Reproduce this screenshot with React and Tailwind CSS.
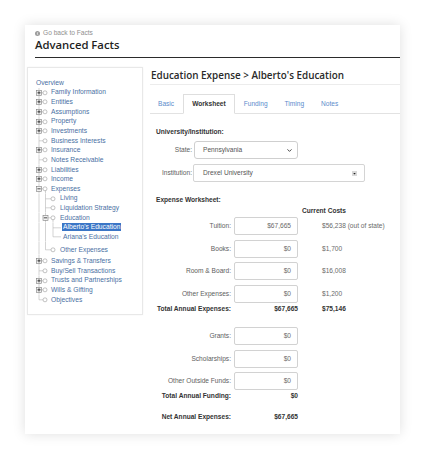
import React from 'react';
import { ChevronDown } from 'lucide-react';

const ROW = 9.65;
const MID = ROW / 2;
const LINE = '#b5b5b5';

// tree rows, x positions are relative to the sidebar's left edge
const X0 = 11;
const X1 = 17.5;
const X2 = 25;

const tree = [
  { label: 'Family Information', lvl: 0, toggle: true },
  { label: 'Entities', lvl: 0, toggle: true },
  { label: 'Assumptions', lvl: 0, toggle: true },
  { label: 'Property', lvl: 0, toggle: true },
  { label: 'Investments', lvl: 0, toggle: true },
  { label: 'Business Interests', lvl: 0 },
  { label: 'Insurance', lvl: 0, toggle: true },
  { label: 'Notes Receivable', lvl: 0 },
  { label: 'Liabilities', lvl: 0, toggle: true },
  { label: 'Income', lvl: 0, toggle: true },
  { label: 'Expenses', lvl: 0, toggle: true, open: true, start: X1 },
  { label: 'Living', lvl: 1 },
  { label: 'Liquidation Strategy', lvl: 1 },
  { label: 'Education', lvl: 1, toggle: true, open: true, start: X2 },
  { label: "Alberto's Education", lvl: 2, selected: true },
  { label: "Ariana's Education", lvl: 2, last: true },
  { spacer: 3.5, lines: [X0, X1] },
  { label: 'Other Expenses', lvl: 1, last: true },
  { spacer: 1.2, lines: [X0] },
  { label: 'Savings & Transfers', lvl: 0, toggle: true },
  { label: 'Buy/Sell Transactions', lvl: 0 },
  { label: 'Trusts and Partnerships', lvl: 0, toggle: true },
  { label: 'Wills & Gifting', lvl: 0, toggle: true },
  { label: 'Objectives', lvl: 0, last: true },
];

function Toggle({ x, open }) {
  return (
    <g>
      <rect x={x - 2.5} y={MID - 2.5} width={5} height={5} fill="#f2f2f2" stroke="#7d7d7d" strokeWidth={0.6} />
      <line x1={x - 1.6} x2={x + 1.6} y1={MID} y2={MID} stroke="#1f1f1f" strokeWidth={0.8} />
      {!open && <line x1={x} x2={x} y1={MID - 1.6} y2={MID + 1.6} stroke="#1f1f1f" strokeWidth={0.8} />}
    </g>
  );
}

function TreeRow({ node }) {
  if (node.spacer) {
    return (
      <svg width={30} height={node.spacer} className="block">
        {node.lines.map((x) => (
          <line key={x} x1={x} x2={x} y1={0} y2={node.spacer} stroke={LINE} strokeWidth={0.6} />
        ))}
      </svg>
    );
  }

  const { lvl, toggle, open, last, start, selected, label } = node;
  const own = [X0, X1, X2][lvl];
  const lines = [X0, X1].slice(0, lvl);
  const cx = lvl === 0 ? 17 : 25;
  const width = lvl === 0 ? 22 : lvl === 1 ? 31 : 34;

  return (
    <div className="flex items-center h-[9.65px]">
      <svg width={width} height={ROW} className="shrink-0">
        {lines.map((x) => (
          <line key={x} x1={x} x2={x} y1={0} y2={ROW} stroke={LINE} strokeWidth={0.6} />
        ))}
        <line x1={own} x2={own} y1={0} y2={last ? MID : ROW} stroke={LINE} strokeWidth={0.6} />
        {start && <line x1={start} x2={start} y1={MID} y2={ROW} stroke={LINE} strokeWidth={0.6} />}
        {lvl < 2 ? (
          <>
            <line x1={own} x2={cx - 2} y1={MID} y2={MID} stroke={LINE} strokeWidth={0.6} />
            <circle cx={cx} cy={MID} r={2} fill="#fff" stroke="#9a9a9a" strokeWidth={0.6} />
          </>
        ) : (
          <line x1={own} x2={33} y1={MID} y2={MID} stroke={LINE} strokeWidth={0.6} />
        )}
        {toggle && <Toggle x={own} open={open} />}
      </svg>
      <span
        className={
          selected
            ? 'ml-0 px-[1px] leading-[8px] bg-[#3b76c6] text-white whitespace-nowrap'
            : lvl === 2
            ? 'ml-0 px-[1px] text-[#4a6fa3] whitespace-nowrap'
            : 'ml-[1px] text-[#4a6fa3] whitespace-nowrap'
        }
      >
        {label}
      </span>
    </div>
  );
}

function Field({ label, value, note }) {
  return (
    <div className="flex items-center h-[18px]">
      <div className="w-[75px] text-right text-[#5e5e5e]">{label}</div>
      <div className="ml-[3px] w-[64px] h-[18px] border border-[#d2d2d2] rounded-[2px] flex items-center justify-end pr-[6px] text-[#6a6a6a]">
        {value}
      </div>
      {note && <div className="ml-[24px] whitespace-nowrap text-[#6a6a6a]">{note}</div>}
    </div>
  );
}

function Total({ label, value, note }) {
  return (
    <div className="flex items-center h-[8px] font-bold text-[#333]">
      <div className="w-[75px] text-right whitespace-nowrap">{label}</div>
      <div className="ml-[3px] w-[64px] text-right">{value}</div>
      {note && <div className="ml-[24px]">{note}</div>}
    </div>
  );
}

export default function App() {
  const tabs = ['Basic', 'Worksheet', 'Funding', 'Timing', 'Notes'];

  return (
    <div className="min-h-[460px] bg-white pt-[25px] pl-[25px] font-['Liberation_Sans',Arial,sans-serif]">
      <div className="w-[375px] h-[409px] bg-white shadow-[0_0_12px_rgba(0,0,0,0.13)]">
        {/* header */}
        <div className="pl-[10px] pt-[3.5px]">
          <div className="border-b border-[#2b2b2b] pb-[5px]">
            <div className="flex items-center h-[9px] gap-[3px] text-[6.6px] text-[#8f8f8f]">
              <svg width="5" height="5" viewBox="0 0 10 10">
                <circle cx="5" cy="5" r="5" fill="#9a9a9a" />
                <path d="M6.5 2.5 L3.8 5 L6.5 7.5" fill="none" stroke="#fff" strokeWidth="1.6" />
              </svg>
              Go back to Facts
            </div>
            <div className="mt-[0.5px] h-[14px] leading-[14px] text-[11.3px] font-semibold text-[#1f1f1f] font-['Open_Sans',sans-serif]">
              Advanced Facts
            </div>
          </div>
        </div>

        <div className="flex">
          {/* sidebar */}
          <div className="ml-[2px] mt-[9px] w-[116px] h-[248px] border border-[#e8e8e8] shadow-[0_0_2px_rgba(0,0,0,0.05)] pt-[10px] text-[6.7px]">
            <div className="h-[9.65px] flex items-center pl-[8px] text-[#4a6fa3]">Overview</div>
            {tree.map((n, i) => (
              <TreeRow key={i} node={n} />
            ))}
          </div>

          {/* content */}
          <div className="ml-[7px] flex-1">
            <div className="mt-[8px] h-[19px] flex items-center pl-[1px] border-b border-[#ececec] text-[9.9px] font-semibold text-[#2a2a2a] font-['Open_Sans',sans-serif]">
              Education Expense &gt; Alberto's Education
            </div>

            <div className="pt-[9px] border-b border-[#e2e2e2] flex gap-[1px] text-[6.6px]">
              {tabs.map((t) =>
                t === 'Worksheet' ? (
                  <div
                    key={t}
                    className="h-[20px] -mb-[1px] px-[8px] flex items-center border border-[#dedede] border-b-white bg-white font-bold text-[#333]"
                  >
                    {t}
                  </div>
                ) : (
                  <div key={t} className="h-[19px] px-[8px] flex items-center text-[#5b8ccb]">
                    {t}
                  </div>
                )
              )}
            </div>

            <div className="pl-[6px] text-[6.6px]">
              <div className="mt-[14px] h-[8px] leading-[8px] font-bold text-[#333]">University/Institution:</div>

              <div className="mt-[5px] flex items-center h-[18px]">
                <div className="w-[36px] text-right text-[#5e5e5e]">State:</div>
                <div className="ml-[2px] w-[104px] h-[18px] border border-[#cfcfcf] rounded-[3px] flex items-center justify-between pl-[8px] pr-[4px] text-[#555]">
                  Pennsylvania
                  <ChevronDown size={7} strokeWidth={3} color="#333" />
                </div>
              </div>

              <div className="mt-[5px] flex items-center h-[18px]">
                <div className="w-[36px] text-right text-[#5e5e5e]">Institution:</div>
                <div className="ml-[1px] w-[172px] h-[18px] border border-[#d4d4d4] rounded-[2px] flex items-center justify-between pl-[9px] pr-[7px] text-[#555]">
                  Drexel University
                  <svg width="5" height="5" viewBox="0 0 10 10">
                    <rect x="0" y="0" width="10" height="10" fill="#d9d9d9" />
                    <path d="M2.5 4 L7.5 4 L5 7 Z" fill="#222" />
                  </svg>
                </div>
              </div>

              <div className="mt-[14px] h-[8px] leading-[8px] font-bold text-[#333]">Expense Worksheet:</div>
              <div className="mt-[3px] h-[8px] leading-[8px] ml-[146px] font-bold text-[#333]">Current Costs</div>

              <div className="mt-[2px] flex flex-col gap-[4.5px]">
                <Field label="Tuition:" value="$67,665" note="$56,238 (out of state)" />
                <Field label="Books:" value="$0" note="$1,700" />
                <Field label="Room & Board:" value="$0" note="$16,008" />
                <Field label="Other Expenses:" value="$0" note="$1,200" />
              </div>

              <div className="mt-[2.5px]">
                <Total label="Total Annual Expenses:" value="$67,665" note="$75,146" />
              </div>

              <div className="mt-[14px] flex flex-col gap-[4.5px]">
                <Field label="Grants:" value="$0" />
                <Field label="Scholarships:" value="$0" />
                <Field label="Other Outside Funds:" value="$0" />
              </div>

              <div className="mt-[2px]">
                <Total label="Total Annual Funding:" value="$0" />
              </div>
              <div className="mt-[13px]">
                <Total label="Net Annual Expenses:" value="$67,665" />
              </div>
            </div>
          </div>
        </div>
      </div>
    </div>
  );
}
